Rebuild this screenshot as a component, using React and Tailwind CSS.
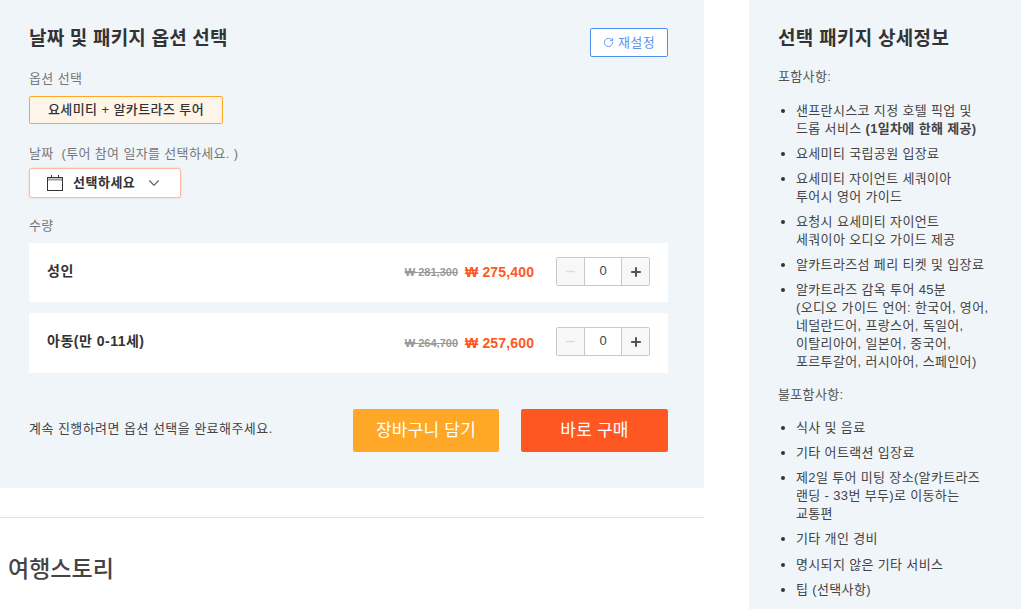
import { ChevronDown, RotateCw, Minus, Plus } from 'lucide-react';

const included = [
  <>샌프란시스코 지정 호텔 픽업 및<br />드롭 서비스 <b className="font-bold">(1일차에 한해 제공)</b></>,
  <>요세미티 국립공원 입장료</>,
  <>요세미티 자이언트 세쿼이아<br />투어시 영어 가이드</>,
  <>요청시 요세미티 자이언트<br />세쿼이아 오디오 가이드 제공</>,
  <>알카트라즈섬 페리 티켓 및 입장료</>,
  <>알카트라즈 감옥 투어 45분<br />(오디오 가이드 언어: 한국어, 영어,<br />네덜란드어, 프랑스어, 독일어,<br />이탈리아어, 일본어, 중국어,<br />포르투갈어, 러시아어, 스페인어)</>,
];

const excluded = [
  <>식사 및 음료</>,
  <>기타 어트랙션 입장료</>,
  <>제2일 투어 미팅 장소(알카트라즈<br />랜딩 - 33번 부두)로 이동하는<br />교통편</>,
  <>기타 개인 경비</>,
  <>명시되지 않은 기타 서비스</>,
  <>팁 (선택사항)</>,
];

const CalendarIcon = () => (
  <svg width="16" height="16" viewBox="0 0 16 16" fill="none" stroke="#333" strokeWidth="1">
    <rect x="0.5" y="2.5" width="15" height="13" />
    <path d="M1 4.5h14" stroke="#999" strokeWidth="2" />
    <path d="M4.5 0v3M11.5 0v3" />
  </svg>
);

const Stepper = () => (
  <div className="flex h-[29px] w-[94px] rounded-[2px] border border-[#c8c8c8] bg-white">
    <div className="flex w-[27px] items-center justify-center bg-[#f8f8f8] text-[#dcdcdc]">
      <Minus size={13} strokeWidth={2.5} />
    </div>
    <div className="flex flex-1 items-center justify-center border-x border-[#c8c8c8] pb-[2px] text-[13px] text-[#444]">0</div>
    <div className="flex w-[27px] items-center justify-center bg-[#f8f8f8] text-[#555]">
      <Plus size={14} strokeWidth={3.5} />
    </div>
  </div>
);

const TicketRow = ({ label, was, now, className }) => (
  <div className={`flex items-center bg-white pr-[18px] pl-[18px] ${className}`}>
    <span className="flex-1 pb-[3px] text-[14px] font-bold tracking-[0.5px] text-[#333]">{label}</span>
    <span className="text-[11px] font-bold text-[#999] line-through">₩ {was}</span>
    <span className="ml-[7px] w-[69px] text-[14px] font-bold tracking-[0.15px] whitespace-nowrap text-[#ff5722]">₩ {now}</span>
    <div className="ml-[22px] self-start pt-[14px]"><Stepper /></div>
  </div>
);

const DetailList = ({ items, className }) => (
  <ul className={`flex list-disc flex-col gap-[7px] pl-[18px] text-[13px] leading-[18px] tracking-[0.35px] text-[#444] marker:text-[#333] ${className}`}>
    {items.map((item, i) => <li key={i}>{item}</li>)}
  </ul>
);

export default function App() {
  return (
    <div
      className="flex h-[609px] overflow-hidden bg-white"
      style={{ fontFamily: '"Liberation Sans", "Noto Sans CJK KR", sans-serif' }}
    >
      <div className="w-[704px] shrink-0">
        <div className="h-[488px] bg-[#f0f5fa] pt-[26px] pr-[36px] pl-[29px]">
          <div className="flex items-start justify-between">
            <h2 className="text-[19px] leading-[26px] font-bold tracking-[0.2px] text-[#333]">날짜 및 패키지 옵션 선택</h2>
            <button className="mt-[2px] flex h-[29px] w-[78px] items-center justify-center gap-[4px] rounded-[2px] border border-[#4d8ff5] bg-white text-[13px] tracking-[0.4px] text-[#5b93ee]">
              <RotateCw size={11} />
              재설정
            </button>
          </div>
          <div className="mt-[12px] text-[13px] leading-[20px] tracking-[0.4px] text-[#777]">옵션 선택</div>
          <div className="mt-[7px] flex h-[28px] w-[194px] items-center justify-center rounded-[2px] border border-[#ffa726] bg-[#fff4e8] text-[13px] font-medium tracking-[0.4px] text-[#333]">
            요세미티 + 알카트라즈 투어
          </div>
          <div className="mt-[20px] text-[13px] leading-[20px] tracking-[0.35px] text-[#777]">날짜&nbsp; (투어 참여 일자를 선택하세요. )</div>
          <div className="mt-[4px] flex h-[30px] w-[152px] items-center gap-[10px] rounded-[3px] border border-[#ffb8a3] bg-white pl-[17px] text-[13px] font-bold tracking-[0.5px] text-[#333] shadow-[0_0_2px_rgba(255,120,80,0.4)]">
            <CalendarIcon />
            선택하세요
            <ChevronDown size={18} className="text-[#666]" strokeWidth={1.5} />
          </div>
          <div className="mt-[18px] text-[13px] leading-[20px] tracking-[0.4px] text-[#777]">수량</div>
          <div className="mt-[7px]">
            <TicketRow label="성인" was="281,300" now="275,400" className="h-[59px]" />
            <TicketRow label="아동(만 0-11세)" was="264,700" now="257,600" className="mt-[11px] h-[60px]" />
          </div>
          <div className="mt-[36px] flex items-center">
            <span className="flex-1 pb-[3px] text-[13px] tracking-[0.45px] text-[#444]">계속 진행하려면 옵션 선택을 완료해주세요.</span>
            <button className="h-[43px] w-[146px] rounded-[2px] bg-[#ffa726] text-[17px] tracking-[0.2px] text-white">장바구니 담기</button>
            <button className="ml-[22px] h-[43px] w-[147px] rounded-[2px] bg-[#ff5722] text-[17px] tracking-[0.2px] text-white">바로 구매</button>
          </div>
        </div>
        <div className="mt-[29px] border-t border-[#e0e0e0] pt-[33px] pl-[8px]">
          <h2 className="text-[23px] leading-[36px] font-medium text-[#444]">여행스토리</h2>
        </div>
      </div>
      <div className="ml-[45px] flex-1 bg-[#f0f5fa] pt-[26px] pl-[29px]">
        <h2 className="text-[19px] leading-[26px] font-bold tracking-[0.3px] text-[#333]">선택 패키지 상세정보</h2>
        <div className="mt-[15px] text-[13px] leading-[20px] tracking-[0.35px] text-[#555]">포함사항:</div>
        <DetailList items={included} className="mt-[15px]" />
        <div className="mt-[14px] text-[13px] leading-[20px] tracking-[0.35px] text-[#555]">불포함사항:</div>
        <DetailList items={excluded} className="mt-[14px] [&>li:nth-child(5)]:mt-[1px]" />
      </div>
    </div>
  );
}
